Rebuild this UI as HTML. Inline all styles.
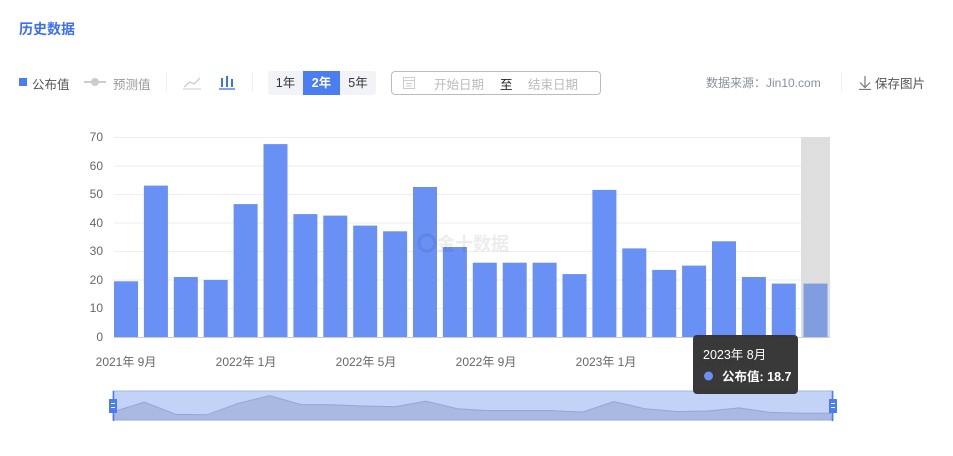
<!DOCTYPE html>
<html><head><meta charset="utf-8"><style>
body{margin:0;width:953px;height:456px;background:#fff;font-family:"Liberation Sans","Noto Sans CJK SC",sans-serif;position:relative;overflow:hidden}
.a{position:absolute;white-space:nowrap}
</style></head><body>
<div class="a" style="left:19px;top:19px;font-size:14px;font-weight:bold;color:#3d6ff2">历史数据</div>
<div class="a" style="left:19px;top:78px;width:8px;height:8px;background:#4a7cf2"></div>
<div class="a" style="left:32px;top:74px;font-size:12.5px;color:#555">公布值</div>
<div class="a" style="left:84px;top:81px;width:22px;height:2px;background:#ccc"></div>
<div class="a" style="left:91px;top:78px;width:8px;height:8px;border-radius:50%;background:#ccc"></div>
<div class="a" style="left:113px;top:74px;font-size:12.5px;color:#999">预测值</div>
<div class="a" style="left:166px;top:72px;width:1px;height:20px;background:#eee"></div>
<svg class="a" style="left:182px;top:74px" width="20" height="16"><polyline points="2,13 8,8 12,10 18,4" fill="none" stroke="#ccc" stroke-width="1.3"/><line x1="1" y1="15" x2="19" y2="15" stroke="#ccc"/></svg>
<svg class="a" style="left:218px;top:73px" width="18" height="17"><rect x="3" y="5" width="2" height="9" fill="#3d6ff2"/><rect x="8" y="3" width="2" height="11" fill="#3d6ff2"/><rect x="13" y="6" width="2" height="8" fill="#3d6ff2"/><line x1="1" y1="16" x2="17" y2="16" stroke="#3d6ff2" stroke-width="1.3"/></svg>
<div class="a" style="left:252px;top:72px;width:1px;height:20px;background:#eee"></div>
<div class="a" style="left:268px;top:71px;width:108px;height:24px;background:#f2f3f7;border-radius:3px"></div>
<div class="a" style="left:268px;top:71px;width:35px;height:24px;line-height:24px;text-align:center;font-size:12.5px;color:#333">1年</div>
<div class="a" style="left:303px;top:71px;width:37px;height:24px;line-height:24px;text-align:center;font-size:12.5px;color:#fff;background:#4a7cf2;font-weight:bold">2年</div>
<div class="a" style="left:340px;top:71px;width:36px;height:24px;line-height:24px;text-align:center;font-size:12.5px;color:#333">5年</div>
<div class="a" style="left:391px;top:71px;width:208px;height:22px;border:1px solid #b8bcc8;border-radius:4px"></div>
<svg class="a" style="left:402px;top:75px" width="14" height="15"><rect x="1.5" y="2.5" width="11" height="11" fill="none" stroke="#ccc"/><line x1="1.5" y1="5.5" x2="12.5" y2="5.5" stroke="#ccc"/><line x1="4" y1="8.5" x2="10" y2="8.5" stroke="#ccc"/><line x1="4" y1="11" x2="10" y2="11" stroke="#ccc"/></svg>
<div class="a" style="left:434px;top:74px;font-size:12.5px;color:#bbb">开始日期</div>
<div class="a" style="left:500px;top:74px;font-size:12.5px;color:#222">至</div>
<div class="a" style="left:528px;top:74px;font-size:12.5px;color:#bbb">结束日期</div>
<div class="a" style="left:706px;top:74px;font-size:12px;color:#8890a0">数据来源：Jin10.com</div>
<div class="a" style="left:841px;top:72px;width:1px;height:20px;background:#eee"></div>
<svg class="a" style="left:857px;top:74px" width="16" height="16"><path d="M8 2V13M3 8.5L8 13.5L13 8.5M2 15.5H14" fill="none" stroke="#777" stroke-width="1.2"/></svg>
<div class="a" style="left:875px;top:73px;font-size:12.5px;color:#555">保存图片</div>
<svg class="a" style="left:0;top:0" width="953" height="456" font-family="Liberation Sans,Noto Sans CJK SC,sans-serif">
<g stroke="#eceef2" stroke-width="1">
<line x1="114" y1="137.5" x2="830" y2="137.5"/><line x1="114" y1="166" x2="830" y2="166"/><line x1="114" y1="194.5" x2="830" y2="194.5"/><line x1="114" y1="223" x2="830" y2="223"/><line x1="114" y1="251.5" x2="830" y2="251.5"/><line x1="114" y1="280" x2="830" y2="280"/><line x1="114" y1="308.5" x2="830" y2="308.5"/>
</g>
<rect x="801" y="137" width="29" height="200" fill="#dedede"/>
<g font-size="12" fill="#666" text-anchor="end">
<text x="103" y="141">70</text><text x="103" y="170">60</text><text x="103" y="198">50</text><text x="103" y="227">40</text><text x="103" y="255">30</text><text x="103" y="284">20</text><text x="103" y="312">10</text><text x="103" y="341">0</text>
</g>
<g fill="#6990f4">
<rect x="114" y="281.3" width="24" height="55.7"/>
<rect x="143.9" y="185.6" width="24" height="151.4"/>
<rect x="173.8" y="277" width="24" height="60"/>
<rect x="203.7" y="279.9" width="24" height="57.1"/>
<rect x="233.6" y="204.1" width="24" height="132.9"/>
<rect x="263.5" y="144.1" width="24" height="192.9"/>
<rect x="293.4" y="214.1" width="24" height="122.9"/>
<rect x="323.3" y="215.6" width="24" height="121.4"/>
<rect x="353.2" y="225.6" width="24" height="111.4"/>
<rect x="383.1" y="231.3" width="24" height="105.7"/>
<rect x="413" y="187" width="24" height="150"/>
<rect x="442.9" y="247" width="24" height="90"/>
<rect x="472.8" y="262.7" width="24" height="74.3"/>
<rect x="502.7" y="262.7" width="24" height="74.3"/>
<rect x="532.6" y="262.7" width="24" height="74.3"/>
<rect x="562.5" y="274.1" width="24" height="62.9"/>
<rect x="592.4" y="189.9" width="24" height="147.1"/>
<rect x="622.3" y="248.4" width="24" height="88.6"/>
<rect x="652.2" y="269.9" width="24" height="67.1"/>
<rect x="682.1" y="265.6" width="24" height="71.4"/>
<rect x="712" y="241.3" width="24" height="95.7"/>
<rect x="741.9" y="277" width="24" height="60"/>
<rect x="771.8" y="283.6" width="24" height="53.4"/>
<rect x="803.5" y="283.6" width="24" height="53.4" fill="#7f9ee0"/>
</g>
<line x1="114" y1="337.5" x2="830" y2="337.5" stroke="#ccc"/>
<g font-size="18" font-weight="bold" fill="#000" opacity="0.07"><text x="437" y="250">金十数据</text></g>
<circle cx="427" cy="243" r="8" fill="none" stroke="#000" stroke-width="3" opacity="0.07"/>
<g font-size="12" fill="#666" text-anchor="middle">
<text x="126" y="366">2021年 9月</text><text x="246" y="366">2022年 1月</text><text x="366" y="366">2022年 5月</text><text x="486" y="366">2022年 9月</text><text x="606" y="366">2023年 1月</text><text x="726" y="366">2023年 5月</text>
</g>
<rect x="113" y="391" width="720" height="29" fill="#c3d3f8" stroke="#aab8d6"/>
<path d="M113 412 L144.3 402 L175.6 414.4 L206.9 414.8 L238.2 403.3 L269.5 395.7 L300.8 404.5 L332.1 404.7 L363.4 406 L394.7 406.7 L426 401.1 L457.3 408.7 L488.6 410.6 L519.9 410.6 L551.2 410.6 L582.5 412.1 L613.8 401.5 L645.1 408.8 L676.4 411.5 L707.7 411 L739 407.9 L770.3 412.4 L801.6 413.3 L833 413.3 L833 420 L113 420 Z" fill="#a9b9e2" stroke="#93a6d6"/>
<line x1="113.5" y1="391" x2="113.5" y2="421" stroke="#4a7cf2" stroke-width="1.5"/>
<line x1="832.5" y1="391" x2="832.5" y2="421" stroke="#4a7cf2" stroke-width="1.5"/>
<rect x="109" y="399" width="8" height="14" fill="#4a7cf2"/><rect x="111" y="403" width="4" height="1" fill="#fff"/><rect x="111" y="407" width="4" height="1" fill="#fff"/>
<rect x="829" y="399" width="8" height="14" fill="#4a7cf2"/><rect x="831" y="403" width="4" height="1" fill="#fff"/><rect x="831" y="407" width="4" height="1" fill="#fff"/>
<rect x="693" y="335" width="105" height="59" rx="4" fill="#333" opacity="0.97"/>
<text x="703" y="359" font-size="12.5" fill="#fff">2023年 8月</text>
<circle cx="708.5" cy="376" r="4.5" fill="#6990f4"/>
<text x="722" y="381" font-size="12.5" fill="#fff" font-weight="bold">公布值: 18.7</text>
</svg>
</body></html>
